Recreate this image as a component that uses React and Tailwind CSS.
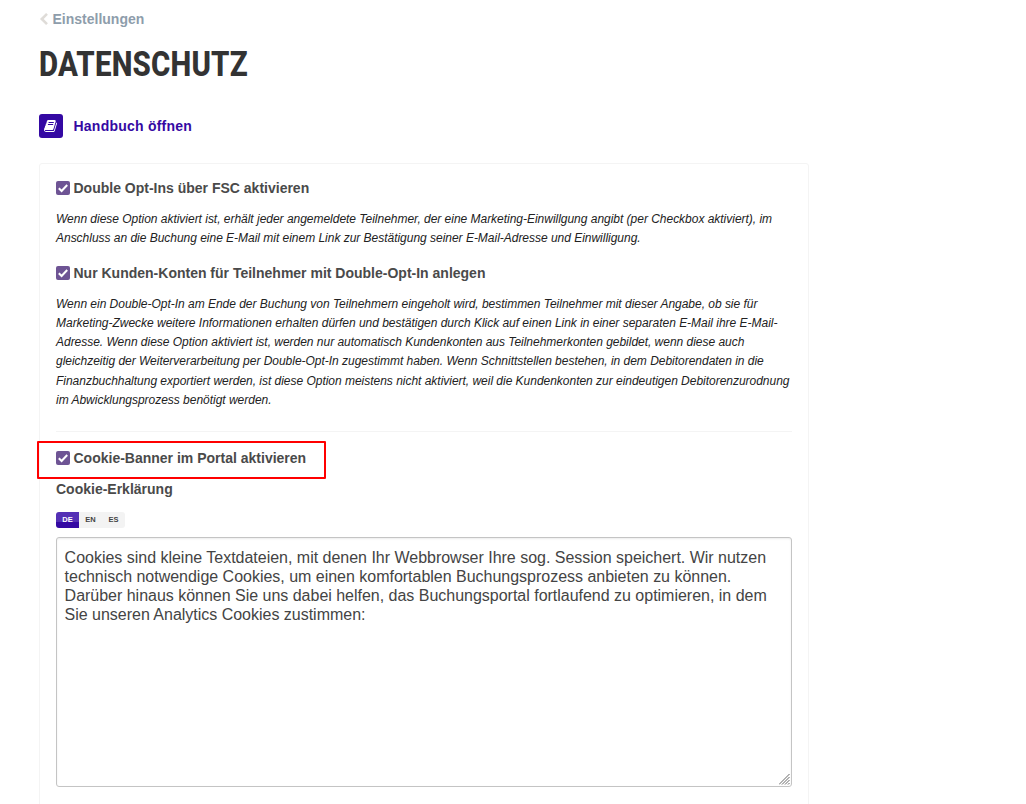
import React, { useState } from 'react';

const LANGUAGES = ['DE', 'EN', 'ES'];

const COOKIE_TEXT =
  'Cookies sind kleine Textdateien, mit denen Ihr Webbrowser Ihre sog. Session speichert. Wir nutzen technisch notwendige Cookies, um einen komfortablen Buchungsprozess anbieten zu können. Darüber hinaus können Sie uns dabei helfen, das Buchungsportal fortlaufend zu optimieren, in dem Sie unseren Analytics Cookies zustimmen:';

function BookIcon() {
  return (
    <svg viewBox="0 0 1792 1792" className="h-[14px] w-[14px]" fill="currentColor">
      <path d="M1639 478q40 57 18 129l-275 906q-19 64-76.5 107.5t-122.5 43.5h-923q-77 0-148.5-53.5t-99.5-131.5q-24-67-2-127 0-4 3-27t4-37q1-8-3-21.5t-3-19.5q2-11 8-21t16.5-23.5 16.5-23.5q23-38 45-91.5t30-91.5q3-10 .5-30t-.5-28q3-11 17-28t17-23q21-36 42-92t25-90q1-9-2.5-32t.5-28q4-13 22-30.5t22-22.5q19-26 42.5-84.5t27.5-96.5q1-8-3-25.5t-2-26.5q2-8 9-18t18-23 17-21q8-12 16.5-30.5t15-35 16-36 19.5-32 26.5-23.5 36-11.5 47.5 5.5l-1 3q38-9 51-9h761q74 0 114 56t18 130l-274 906q-36 119-71.5 153.5t-128.5 34.5h-869q-27 0-38 15-11 16-1 43 24 70 144 70h923q29 0 56-15.5t35-41.5l300-987q7-22 5-57 38 15 59 43zm-1064 2q-4 13 2 22.5t20 9.5h608q13 0 25.5-9.5t16.5-22.5l21-64q4-13-2-22.5t-20-9.5h-608q-13 0-25.5 9.5t-16.5 22.5zm-83 256q-4 13 2 22.5t20 9.5h608q13 0 25.5-9.5t16.5-22.5l21-64q4-13-2-22.5t-20-9.5h-608q-13 0-25.5 9.5t-16.5 22.5z" />
    </svg>
  );
}

function CheckOption({ label }) {
  const [checked, setChecked] = useState(true);

  return (
    <label className="flex h-5 items-center text-sm font-bold text-[#4a4a4a]">
      <input type="checkbox" className="sr-only" checked={checked} onChange={() => setChecked(!checked)} />
      <span className="mr-[3.5px] flex h-[14px] w-[14px] items-center justify-center rounded-[2px] bg-[#6e5494]">
        {checked && (
          <svg viewBox="0 0 14 14" className="h-[14px] w-[14px]" fill="none" stroke="white" strokeWidth="2">
            <path d="M2.8 7.2 L5.6 10 L11.2 4" />
          </svg>
        )}
      </span>
      {label}
    </label>
  );
}

function Hint({ children }) {
  return <p className="text-xs leading-[19.2px] tracking-[-0.022px] text-[#222] italic">{children}</p>;
}

export default function App() {
  const [language, setLanguage] = useState('DE');
  const [text, setText] = useState(COOKIE_TEXT);

  return (
    <div className="h-[804px] w-full overflow-hidden bg-white pl-[39px] font-['Liberation_Sans',Arial,sans-serif]">
      <a className="flex h-[38px] items-center text-sm font-bold text-[#8e9dab]">
        <svg viewBox="0 0 10 14" className="mr-[3.5px] h-[14px] w-[10px]" fill="none" stroke="#dfdcd8" strokeWidth="2.6">
          <path d="M8 1.8 L2.8 7 L8 12.2" />
        </svg>
        Einstellungen
      </a>

      <h1 className="mt-[6px] h-[42px] w-fit origin-left scale-x-[0.842] text-[35px] leading-[42px] font-extrabold tracking-[0.2px] whitespace-nowrap text-[#333] font-['Roboto',sans-serif]">
        DATENSCHUTZ
      </h1>

      <a className="mt-[28px] flex h-6 items-center text-sm font-bold tracking-[0.23px] text-[#3409a3]">
        <span className="mr-[10.5px] flex h-6 w-6 items-center justify-center rounded-[3px] bg-[#3409a3] text-white">
          <BookIcon />
        </span>
        Handbuch öffnen
      </a>

      <div className="mt-[25px] h-[700px] w-[770px] rounded-[3px] border border-[#f4f4f4] px-4 pt-[14px]">
        <CheckOption label="Double Opt-Ins über FSC aktivieren" />
        <div className="mt-3">
          <Hint>
            Wenn diese Option aktiviert ist, erhält jeder angemeldete Teilnehmer, der eine Marketing-Einwillgung angibt (per Checkbox aktiviert), im Anschluss an die Buchung eine E-Mail mit einem Link zur Bestätigung seiner E-Mail-Adresse und Einwilligung.
          </Hint>
        </div>

        <div className="mt-[14.6px]">
          <CheckOption label="Nur Kunden-Konten für Teilnehmer mit Double-Opt-In anlegen" />
        </div>
        <div className="mt-[11.7px]">
          <Hint>
            Wenn ein Double-Opt-In am Ende der Buchung von Teilnehmern eingeholt wird, bestimmen Teilnehmer mit dieser Angabe, ob sie für Marketing-Zwecke weitere Informationen erhalten dürfen und bestätigen durch Klick auf einen Link in einer separaten E-Mail ihre E-Mail-Adresse. Wenn diese Option aktiviert ist, werden nur automatisch Kundenkonten aus Teilnehmerkonten gebildet, wenn diese auch gleichzeitig der Weiterverarbeitung per Double-Opt-In zugestimmt haben. Wenn Schnittstellen bestehen, in dem Debitorendaten in die Finanzbuchhaltung exportiert werden, ist diese Option meistens nicht aktiviert, weil die Kundenkonten zur eindeutigen Debitorenzurodnung im Abwicklungsprozess benötigt werden.
          </Hint>
        </div>

        <hr className="mt-[21.1px] border-[#f4f4f4]" />

        <div className="-ml-[19px] mt-[9px] h-[38px] w-[289px] rounded-[1px] border-2 border-[#ff0000] pt-[5px] pl-[17px]">
          <CheckOption label="Cookie-Banner im Portal aktivieren" />
        </div>

        <h2 className="h-5 text-sm leading-5 font-bold text-[#4a4a4a]">Cookie-Erklärung</h2>

        <div className="mt-[13px] flex h-4 w-fit overflow-hidden rounded-[3px] bg-[#f3f3f3]">
          {LANGUAGES.map((lang) => (
            <button
              key={lang}
              onClick={() => setLanguage(lang)}
              className={`h-4 w-[23px] text-[7.5px] leading-4 font-bold ${
                lang === language
                  ? 'bg-linear-to-b from-[#5430b5] from-60% to-[#3409a3] to-60% text-white'
                  : 'text-[#444]'
              }`}
            >
              {lang}
            </button>
          ))}
        </div>

        <div className="relative mt-[9px] h-[250px] w-[736px]">
          <textarea
            value={text}
            onChange={(e) => setText(e.target.value)}
            spellCheck={false}
            className="block h-full w-full resize-none rounded-[3px] border border-[#c4c4c4] bg-white px-[7.6px] pt-[10px] pb-2 text-base leading-[19px] tracking-[-0.015px] text-[#444] shadow-[inset_0_1px_2px_rgba(0,0,0,0.08)] outline-none"
          />
          <svg viewBox="0 0 11 11" className="absolute right-[2px] bottom-[2px] h-[11px] w-[11px]" fill="none" stroke="#666">
            <path d="M0 10.5 L10.5 0 M3 10.5 L10.5 3 M6 10.5 L10.5 6 M9 10.5 L10.5 9" />
          </svg>
        </div>
      </div>
    </div>
  );
}
